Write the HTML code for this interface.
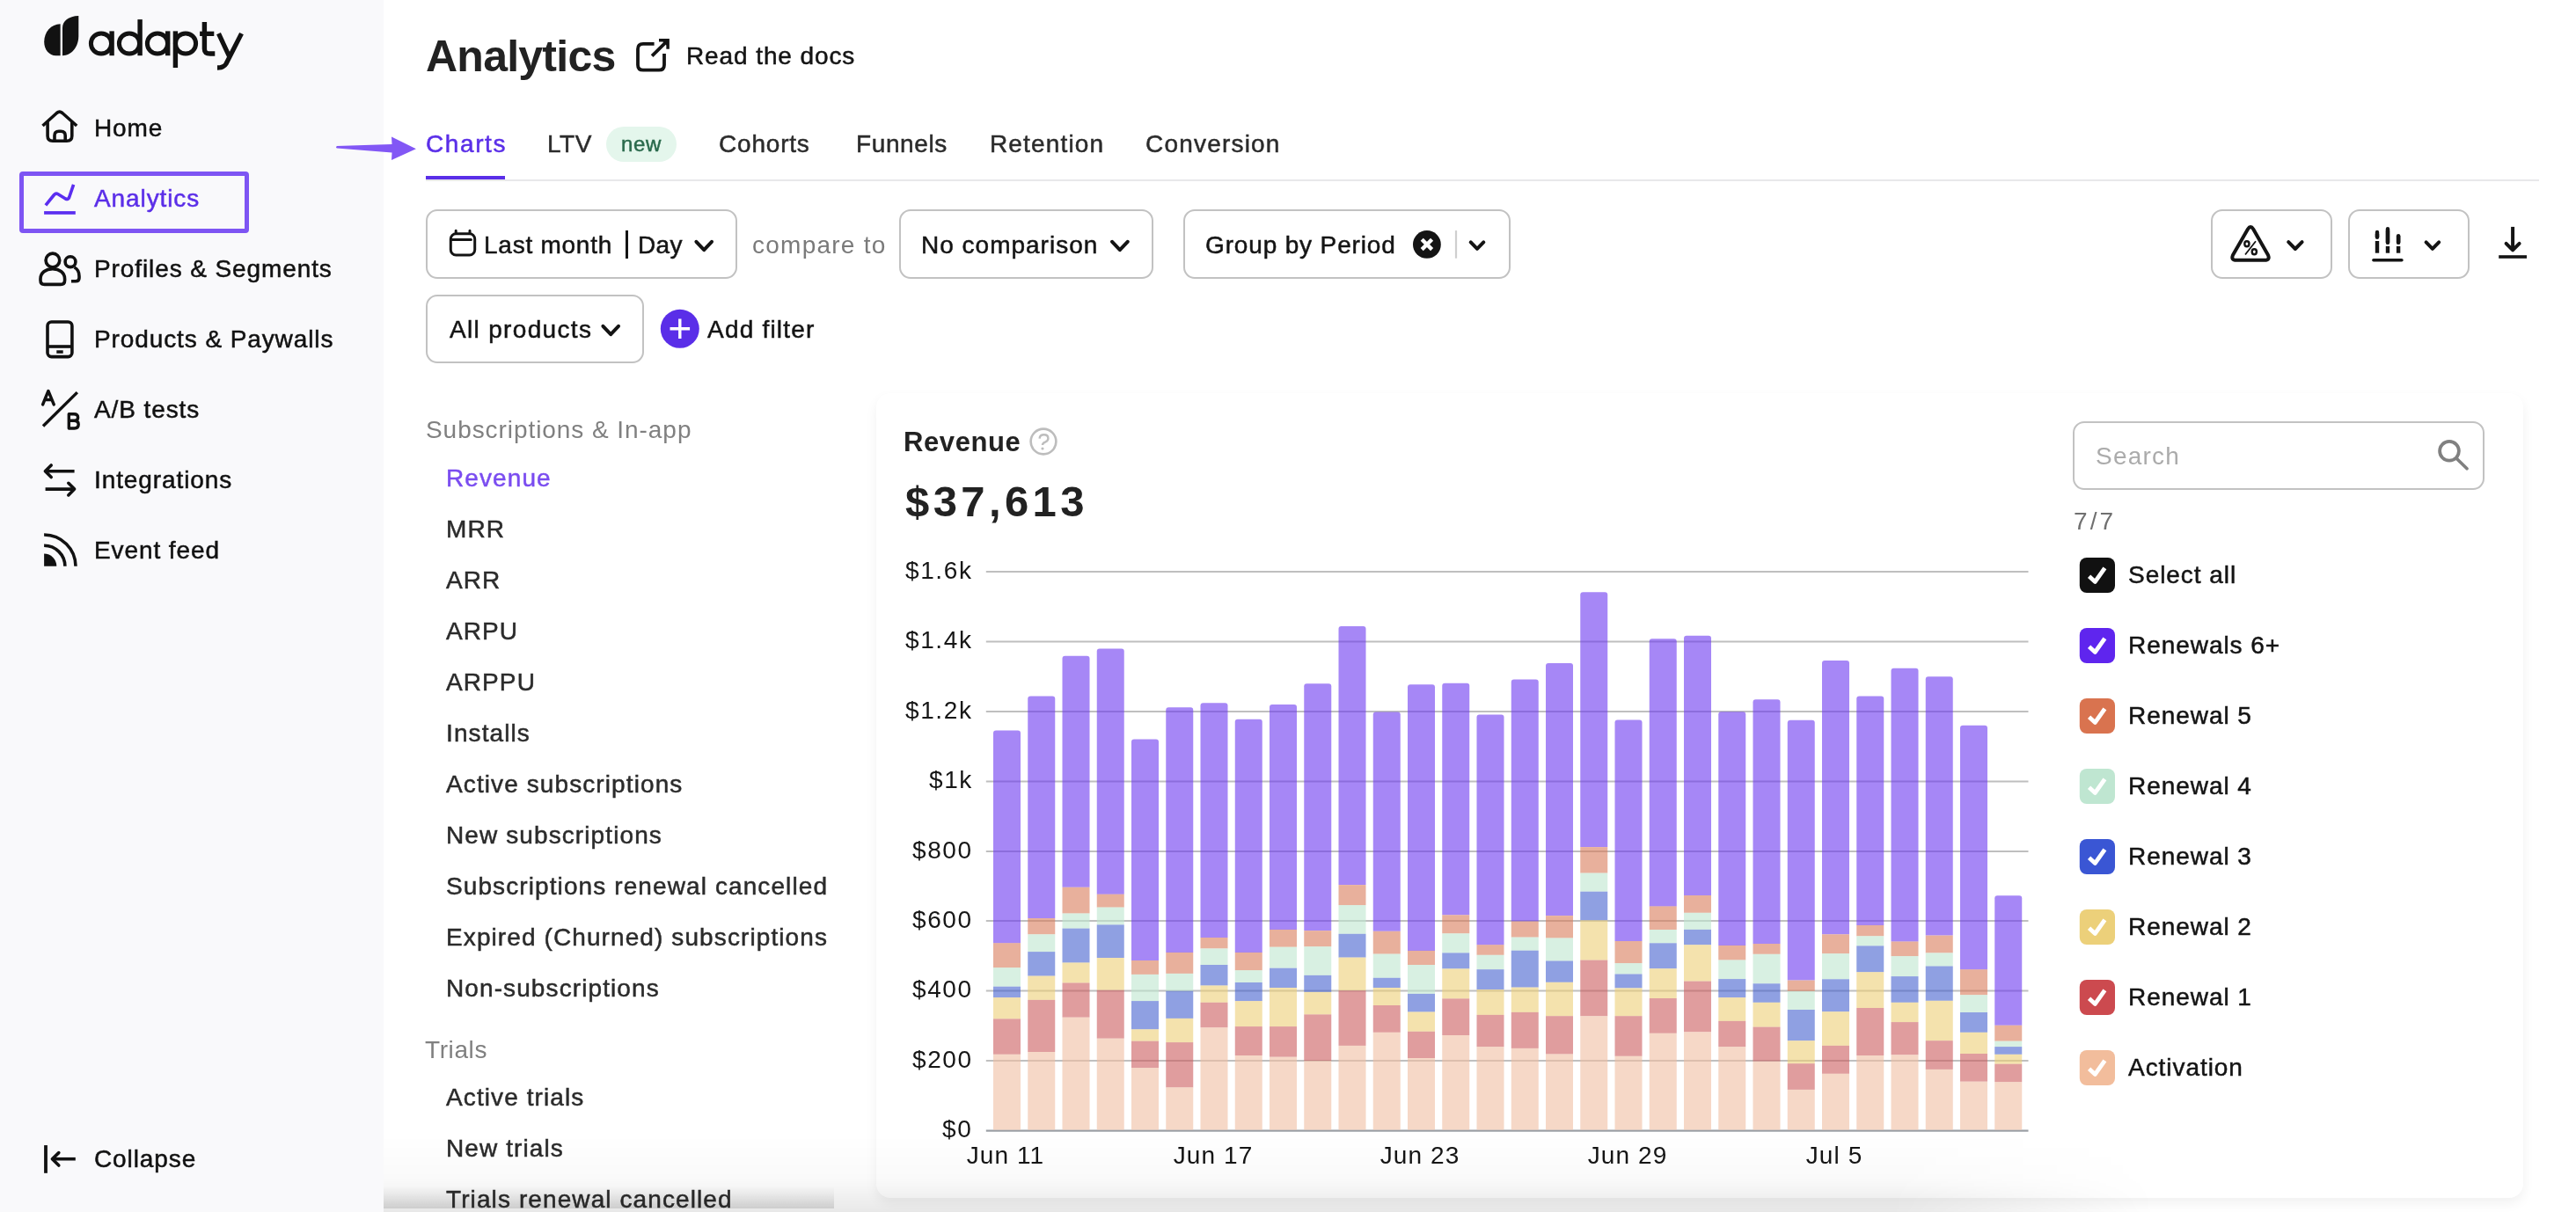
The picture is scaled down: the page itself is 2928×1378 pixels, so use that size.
<!DOCTYPE html>
<html><head><meta charset="utf-8"><style>
html,body{margin:0;padding:0;width:2928px;height:1378px;overflow:hidden;background:#fff}
body{position:relative;font-family:"Liberation Sans",sans-serif}
.t{position:absolute;line-height:1;white-space:nowrap;font-family:"Liberation Sans",sans-serif}
.m{-webkit-text-stroke:0.5px currentColor}
.t{will-change:transform}
svg{overflow:visible}
</style></head><body>
<div style="position:absolute;left:0.0px;top:0.0px;width:436.0px;height:1378.0px;background:#f9f9fb"></div>
<svg style="position:absolute;left:40px;top:10px;" width="250" height="75" viewBox="40 10 250 75"><g fill="#121212">
<path d="M68.6 27.3 L68.6 63.2 L63.5 63.2 C55.8 63.2 50.2 56.5 50.2 47.5 C50.2 36.5 58 27.6 68.6 27.3 Z"/>
<path d="M71 63.2 L71 31.5 C71 24 78 18.2 89.3 18 L89.3 41 C89.3 53.5 81 63.2 71 63.2 Z"/>
</g>
<g fill="none" stroke="#121212" stroke-width="5">
<circle cx="115" cy="49.5" r="11.6"/>
<circle cx="147" cy="49.5" r="11.6"/>
<circle cx="179" cy="49.5" r="11.6"/>
<circle cx="211" cy="49.5" r="11.6"/>
</g>
<g fill="#121212">
<rect x="124.4" y="35.4" width="5.4" height="27.8"/>
<rect x="156.4" y="22.1" width="5.4" height="41.1"/>
<rect x="188" y="35.4" width="5.4" height="27.8"/>
<rect x="196.7" y="35.4" width="5.4" height="41.6"/>
</g>
<path d="M232.4 25 V55.5 C232.4 60 235 61 239 61 H244.3" fill="none" stroke="#121212" stroke-width="5.4"/>
<rect x="227.1" y="35.7" width="16.2" height="5.3" fill="#121212"/>
<path d="M248.5 38.1 L261 65 M274.5 38.1 L257 72.5 C255 76 252 77 247 77" fill="none" stroke="#121212" stroke-width="5.3"/>
</svg>
<div style="position:absolute;left:22.0px;top:195.3px;width:261.3px;height:70.1px;box-sizing:border-box;border:5.8px solid #7e55f3;border-radius:4px"></div>
<svg style="position:absolute;left:40px;top:115px;" width="60" height="60" viewBox="40 115 60 60"><g fill="none" stroke="#111" stroke-width="3.6" stroke-linecap="round" stroke-linejoin="round">
<path d="M48.5 143 L64.5 128.5 Q67.7 125.8 70.9 128.5 L87.2 143" stroke-linecap="butt"/>
<path d="M54.1 139.5 V154.5 Q54.1 160.2 59.8 160.2 H76 Q81.8 160.2 81.8 154.5 V139.5" />
<path d="M62 160.2 V154 Q62 149.2 66.8 149.2 H69.2 Q74.2 149.2 74.2 154 V160.2"/>
</g></svg>
<svg style="position:absolute;left:40px;top:200px;" width="60" height="60" viewBox="40 200 60 60"><g fill="none" stroke="#5b2ef0" stroke-width="3.6" stroke-linejoin="round">
<path d="M51.9 233.4 L61.5 221.5 Q63.5 219.3 66 220.8 L74.5 226 Q77.5 227.3 78.6 224.5 L83.6 209.9"/>
</g><rect x="50.1" y="240.1" width="35.7" height="3.7" fill="#5b2ef0"/></svg>
<svg style="position:absolute;left:40px;top:280px;" width="60" height="50" viewBox="40 280 60 50"><g fill="none" stroke="#111" stroke-width="3.6" stroke-linecap="round" stroke-linejoin="round">
<circle cx="59.9" cy="296" r="7.85"/>
<path d="M46 317 C46 310 52 305.8 59.8 305.8 C67.6 305.8 73.6 310 73.6 317 V318.8 Q73.6 323.4 69 323.4 H50.6 Q46 323.4 46 318.8 Z"/>
<circle cx="80" cy="297.7" r="5.9"/>
<path d="M84.5 304 C88.5 306 90 310 90 314 V316 Q90 319.8 86 319.8 H81" stroke-linecap="butt"/>
</g></svg>
<svg style="position:absolute;left:40px;top:355px;" width="60" height="60" viewBox="40 355 60 60"><g fill="none" stroke="#111" stroke-width="3.6" stroke-linecap="round" stroke-linejoin="round">
<rect x="54" y="366" width="27.9" height="39.6" rx="4.5"/>
<path d="M54 394 H81.9" stroke-linecap="butt"/>
</g><rect x="64.3" y="398.3" width="7.4" height="3.5" fill="#111"/></svg>
<svg style="position:absolute;left:40px;top:435px;" width="60" height="60" viewBox="40 435 60 60"><g fill="none" stroke="#111" stroke-width="3.4" stroke-linecap="round" stroke-linejoin="round">
<path d="M48.6 460 L54.9 444.5 L61.3 460 M51 454.5 H58.8"/>
<path d="M49 484.5 L87.8 446.1" stroke-linecap="butt"/>
<path d="M78.3 487 V470.8 H84 Q88.6 470.8 88.6 474.7 Q88.6 478.3 84.3 478.3 H78.3 M84.3 478.3 Q89.2 478.3 89.2 482.5 Q89.2 487 84.5 487 H78.3"/>
</g></svg>
<svg style="position:absolute;left:40px;top:515px;" width="60" height="60" viewBox="40 515 60 60"><g fill="none" stroke="#111" stroke-width="3.6" stroke-linecap="round" stroke-linejoin="round">
<path d="M51.5 535.8 H84.6" stroke-linecap="butt"/>
<path d="M58.2 529 L51.4 535.8 L58.2 542.6"/>
<path d="M51.6 556.1 H85" stroke-linecap="butt"/>
<path d="M77.8 549.3 L84.6 556.1 L77.8 562.9"/>
</g></svg>
<svg style="position:absolute;left:40px;top:595px;" width="60" height="60" viewBox="40 595 60 60"><path d="M50.1 629.6 A14.2 14.2 0 0 1 64.3 643.8 H50.1 Z" fill="#111"/>
<g fill="none" stroke="#111" stroke-width="3.6">
<path d="M50.1 620.2 A23.8 23.8 0 0 1 73.9 643.8"/>
<path d="M50.1 608 A36 36 0 0 1 86 643.8"/>
</g></svg>
<svg style="position:absolute;left:40px;top:1288px;" width="60" height="60" viewBox="40 1288 60 60"><rect x="50.1" y="1302.1" width="3.8" height="31.7" fill="#111"/>
<g fill="none" stroke="#111" stroke-width="3.6" stroke-linecap="round" stroke-linejoin="round"><path d="M59.5 1317.7 H85.8" stroke-linecap="butt"/><path d="M66.8 1310.6 L59.4 1317.8 L66.8 1325"/></g></svg>
<div class="t m" style="left:106.5px;top:132.3px;font-size:28px;color:#111;font-weight:400;letter-spacing:0.9px;">Home</div>
<div class="t m" style="left:106.5px;top:212.3px;font-size:28px;color:#5b2ee8;font-weight:400;letter-spacing:0.9px;">Analytics</div>
<div class="t m" style="left:106.5px;top:292.3px;font-size:28px;color:#111;font-weight:400;letter-spacing:0.9px;">Profiles &amp; Segments</div>
<div class="t m" style="left:106.5px;top:372.3px;font-size:28px;color:#111;font-weight:400;letter-spacing:0.9px;">Products &amp; Paywalls</div>
<div class="t m" style="left:106.5px;top:452.3px;font-size:28px;color:#111;font-weight:400;letter-spacing:0.9px;">A/B tests</div>
<div class="t m" style="left:106.5px;top:532.3px;font-size:28px;color:#111;font-weight:400;letter-spacing:0.9px;">Integrations</div>
<div class="t m" style="left:106.5px;top:612.3px;font-size:28px;color:#111;font-weight:400;letter-spacing:0.9px;">Event feed</div>
<div class="t m" style="left:106.5px;top:1304.3px;font-size:28px;color:#111;font-weight:400;letter-spacing:0.9px;">Collapse</div>
<div class="t" style="left:484.3px;top:38.7px;font-size:50px;color:#222;font-weight:700;letter-spacing:-0.76px;">Analytics</div>
<svg style="position:absolute;left:715px;top:35px;" width="60" height="55" viewBox="715 35 60 55"><g fill="none" stroke="#141414" stroke-width="3.8">
<path d="M743.6 49.8 H731 Q725 49.8 725 55.8 V73.7 Q725 79.7 731 79.7 H749 Q755 79.7 755 73.7 V61.1"/>
<path d="M741.1 63.6 L758 46.9"/>
</g><path d="M749 45.8 H759.1 V55.7" fill="none" stroke="#141414" stroke-width="3.5"/><path d="M752 45.8 H759.1 V52.9 Z" fill="#141414"/></svg>
<div class="t m" style="left:780.2px;top:50.3px;font-size:28px;color:#141414;font-weight:400;letter-spacing:0.9px;">Read the docs</div>
<div style="position:absolute;left:484.0px;top:204.0px;width:2402.0px;height:2.0px;background:#e8e8ea"></div>
<div style="position:absolute;left:484.0px;top:200.0px;width:90.0px;height:4.2px;background:#5a2ee8"></div>
<div class="t m" style="left:483.7px;top:149.8px;font-size:28px;color:#5a2ee8;font-weight:400;letter-spacing:1.6px;">Charts</div>
<div class="t m" style="left:621.8px;top:149.8px;font-size:28px;color:#2b2b2b;font-weight:400;letter-spacing:0.6px;">LTV</div>
<div style="position:absolute;left:689.0px;top:144.4px;width:80.0px;height:39.6px;background:#e4f6ec;border-radius:20px"></div>
<div class="t m" style="left:706.0px;top:152.1px;font-size:24px;color:#2a6a4c;font-weight:400;letter-spacing:0.7px;">new</div>
<div class="t m" style="left:817.0px;top:149.8px;font-size:28px;color:#2b2b2b;font-weight:400;letter-spacing:0.8px;">Cohorts</div>
<div class="t m" style="left:973.0px;top:149.8px;font-size:28px;color:#2b2b2b;font-weight:400;letter-spacing:0.6px;">Funnels</div>
<div class="t m" style="left:1125.1px;top:149.8px;font-size:28px;color:#2b2b2b;font-weight:400;letter-spacing:1.15px;">Retention</div>
<div class="t m" style="left:1302.0px;top:149.8px;font-size:28px;color:#2b2b2b;font-weight:400;letter-spacing:1.2px;">Conversion</div>
<svg style="position:absolute;left:370px;top:145px;" width="120" height="45" viewBox="370 145 120 45"><path d="M383 166 L445.5 164 L445 155.4 L472.9 169.3 L445 182.1 L445.5 173.6 L383 168.6 Q381 167.3 383 166 Z" fill="#8257f5"/></svg>
<div style="position:absolute;left:484.4px;top:238.2px;width:354.1px;height:79.2px;box-sizing:border-box;border:2px solid #c2c2c2;border-radius:13px;background:#fff"></div>
<div style="position:absolute;left:1021.7px;top:238.2px;width:289.6px;height:79.2px;box-sizing:border-box;border:2px solid #c2c2c2;border-radius:13px;background:#fff"></div>
<div style="position:absolute;left:1344.8px;top:238.2px;width:372.2px;height:79.2px;box-sizing:border-box;border:2px solid #c2c2c2;border-radius:13px;background:#fff"></div>
<div style="position:absolute;left:2513.0px;top:238.2px;width:137.7px;height:79.2px;box-sizing:border-box;border:2px solid #c2c2c2;border-radius:13px;background:#fff"></div>
<div style="position:absolute;left:2668.5px;top:238.2px;width:138.5px;height:79.2px;box-sizing:border-box;border:2px solid #c2c2c2;border-radius:13px;background:#fff"></div>
<div style="position:absolute;left:484.4px;top:334.6px;width:248.1px;height:78.7px;box-sizing:border-box;border:2px solid #c2c2c2;border-radius:13px;background:#fff"></div>
<svg style="position:absolute;left:500px;top:250px;" width="60" height="55" viewBox="500 250 60 55"><g fill="none" stroke="#141414" stroke-width="3">
<rect x="512.3" y="265.7" width="27.4" height="24.3" rx="6"/>
<path d="M513 272.5 H535.4" stroke-linecap="round"/>
<path d="M518.2 262.3 V265.5 M534 262.3 V265.5" stroke-linecap="round"/>
</g></svg>
<div class="t m" style="left:550.0px;top:264.5px;font-size:28px;color:#141414;font-weight:400;letter-spacing:0.75px;">Last month</div>
<div style="position:absolute;left:711.0px;top:261.5px;width:2.6px;height:32.5px;background:#141414"></div>
<div class="t m" style="left:724.5px;top:264.5px;font-size:28px;color:#141414;font-weight:400;letter-spacing:0.3px;">Day</div>
<svg style="position:absolute;left:780px;top:260px;" width="40" height="40" viewBox="780 260 40 40"><path d="M791.4 274.8 L800.2 284.2 L809.0 274.8" fill="none" stroke="#141414" stroke-width="4.0" stroke-linecap="round" stroke-linejoin="round"/></svg>
<div class="t" style="left:854.5px;top:264.5px;font-size:28px;color:#7a7a7a;font-weight:400;letter-spacing:1.25px;">compare to</div>
<div class="t m" style="left:1047.1px;top:264.5px;font-size:28px;color:#141414;font-weight:400;letter-spacing:1.0px;">No comparison</div>
<svg style="position:absolute;left:1255px;top:260px;" width="40" height="40" viewBox="1255 260 40 40"><path d="M1264.1 274.8 L1272.9 284.2 L1281.7 274.8" fill="none" stroke="#141414" stroke-width="4.0" stroke-linecap="round" stroke-linejoin="round"/></svg>
<div class="t m" style="left:1369.5px;top:264.5px;font-size:28px;color:#141414;font-weight:400;letter-spacing:0.85px;">Group by Period</div>
<svg style="position:absolute;left:1595px;top:255px;" width="105" height="45" viewBox="1595 255 105 45"><circle cx="1621.9" cy="277.9" r="15.9" fill="#141414"/>
<path d="M1616.2 272.2 L1627.6 283.6 M1627.6 272.2 L1616.2 283.6" stroke="#fff" stroke-width="4.4"/>
<rect x="1653.9" y="262.1" width="2.2" height="31.6" fill="#cfcfcf"/><path d="M1671.7 275.4 L1679.0 282.9 L1686.3 275.4" fill="none" stroke="#141414" stroke-width="4.0" stroke-linecap="round" stroke-linejoin="round"/></svg>
<svg style="position:absolute;left:2525px;top:250px;" width="100" height="55" viewBox="2525 250 100 55"><path d="M2555 260.5 Q2558.1 255.5 2561.2 260.5 L2578 290 Q2580.5 295.8 2574 295.8 H2542 Q2535.5 295.8 2538 290 Z" fill="none" stroke="#141414" stroke-width="4" stroke-linejoin="round"/>
<ellipse cx="2553.9" cy="277.3" rx="2.6" ry="3" fill="none" stroke="#141414" stroke-width="2.4"/>
<ellipse cx="2562.3" cy="286.3" rx="2.6" ry="3" fill="none" stroke="#141414" stroke-width="2.4"/>
<path d="M2552 289.5 L2564 274.3" stroke="#141414" stroke-width="1.8"/><path d="M2601.2 275.2 L2608.9 283.0 L2616.6 275.2" fill="none" stroke="#141414" stroke-width="4.0" stroke-linecap="round" stroke-linejoin="round"/></svg>
<svg style="position:absolute;left:2685px;top:250px;" width="100" height="55" viewBox="2685 250 100 55"><g stroke="#141414" stroke-width="4.4" stroke-linecap="round" fill="none">
<path d="M2702 264 V269.7" /><path d="M2714 260.2 V275.9"/><path d="M2726.1 268.1 V275.9"/>
<path d="M2697.9 295.8 H2729.9" stroke-width="3.6"/>
</g><g fill="#141414"><rect x="2699.8" y="274" width="4.4" height="13.7"/><rect x="2711.8" y="280" width="4.4" height="7.7"/><rect x="2723.9" y="280" width="4.4" height="7.7"/>
<rect x="2699.8" y="266" width="4.4" height="3.7"/><rect x="2711.8" y="262" width="4.4" height="13.9"/><rect x="2723.9" y="268" width="4.4" height="7.9"/></g><path d="M2757.6 275.4 L2764.9 282.9 L2772.2 275.4" fill="none" stroke="#141414" stroke-width="4.0" stroke-linecap="round" stroke-linejoin="round"/></svg>
<svg style="position:absolute;left:2825px;top:250px;" width="60" height="55" viewBox="2825 250 60 55"><path d="M2856.1 257.9 V283" stroke="#141414" stroke-width="4"/>
<path d="M2848.6 276.8 L2856.1 284.3 L2863.6 276.8" fill="none" stroke="#141414" stroke-width="4" stroke-linecap="round" stroke-linejoin="round"/>
<rect x="2840.2" y="290.2" width="31.8" height="3.6" fill="#141414"/></svg>
<div class="t m" style="left:511.0px;top:360.5px;font-size:28px;color:#141414;font-weight:400;letter-spacing:1.33px;">All products</div>
<svg style="position:absolute;left:675px;top:360px;" width="40" height="40" viewBox="675 360 40 40"><path d="M685.4 370.8 L694.2 380.2 L703.0 370.8" fill="none" stroke="#141414" stroke-width="4.0" stroke-linecap="round" stroke-linejoin="round"/></svg>
<svg style="position:absolute;left:745px;top:345px;" width="60" height="60" viewBox="745 345 60 60"><circle cx="772.8" cy="373.8" r="22" fill="#5a2ee8"/>
<path d="M772.8 362.5 V385.1 M761.5 373.8 H784.1" stroke="#fff" stroke-width="3.4"/></svg>
<div class="t m" style="left:803.9px;top:360.5px;font-size:28px;color:#141414;font-weight:400;letter-spacing:1.2px;">Add filter</div>
<div style="position:absolute;left:436.0px;top:1348.0px;width:512.0px;height:26.0px;background:linear-gradient(rgba(0,0,0,0) 0%, rgba(0,0,0,0.03) 35%, rgba(0,0,0,0.12) 100%)"></div>
<div class="t" style="left:483.7px;top:475.0px;font-size:28px;color:#808080;font-weight:400;letter-spacing:0.94px;">Subscriptions &amp; In-app</div>
<div class="t m" style="left:507.1px;top:529.5px;font-size:28px;color:#7a4cf0;font-weight:400;letter-spacing:1.1px;">Revenue</div>
<div class="t m" style="left:507.1px;top:587.5px;font-size:28px;color:#2b2b2b;font-weight:400;letter-spacing:1.1px;">MRR</div>
<div class="t m" style="left:507.1px;top:645.5px;font-size:28px;color:#2b2b2b;font-weight:400;letter-spacing:1.1px;">ARR</div>
<div class="t m" style="left:507.1px;top:703.5px;font-size:28px;color:#2b2b2b;font-weight:400;letter-spacing:1.1px;">ARPU</div>
<div class="t m" style="left:507.1px;top:761.5px;font-size:28px;color:#2b2b2b;font-weight:400;letter-spacing:1.1px;">ARPPU</div>
<div class="t m" style="left:507.1px;top:819.5px;font-size:28px;color:#2b2b2b;font-weight:400;letter-spacing:1.1px;">Installs</div>
<div class="t m" style="left:507.1px;top:877.5px;font-size:28px;color:#2b2b2b;font-weight:400;letter-spacing:1.1px;">Active subscriptions</div>
<div class="t m" style="left:507.1px;top:935.5px;font-size:28px;color:#2b2b2b;font-weight:400;letter-spacing:1.1px;">New subscriptions</div>
<div class="t m" style="left:507.1px;top:993.5px;font-size:28px;color:#2b2b2b;font-weight:400;letter-spacing:1.1px;">Subscriptions renewal cancelled</div>
<div class="t m" style="left:507.1px;top:1051.5px;font-size:28px;color:#2b2b2b;font-weight:400;letter-spacing:1.1px;">Expired (Churned) subscriptions</div>
<div class="t m" style="left:507.1px;top:1109.5px;font-size:28px;color:#2b2b2b;font-weight:400;letter-spacing:1.1px;">Non-subscriptions</div>
<div class="t" style="left:483.1px;top:1179.8px;font-size:28px;color:#808080;font-weight:400;letter-spacing:0.6px;">Trials</div>
<div class="t m" style="left:507.1px;top:1234.3px;font-size:28px;color:#2b2b2b;font-weight:400;letter-spacing:1.1px;">Active trials</div>
<div class="t m" style="left:507.1px;top:1292.3px;font-size:28px;color:#2b2b2b;font-weight:400;letter-spacing:1.1px;">New trials</div>
<div class="t m" style="left:507.1px;top:1350.3px;font-size:28px;color:#2b2b2b;font-weight:400;letter-spacing:1.1px;">Trials renewal cancelled</div>
<div style="position:absolute;left:995.6px;top:446.7px;width:1872.4px;height:915.6px;background:#fff;border-radius:16px;box-shadow:0 6px 14px rgba(0,0,0,0.06)"></div>
<div class="t" style="left:1027.3px;top:486.7px;font-size:31px;color:#222;font-weight:700;letter-spacing:0.6px;">Revenue</div>
<svg style="position:absolute;left:1165px;top:480px;" width="45" height="45" viewBox="1165 480 45 45"><circle cx="1186" cy="502" r="14.4" fill="none" stroke="#bdbdbd" stroke-width="2.6"/>
<path d="M1181.6 498.6 Q1182 494.3 1186.6 494.3 Q1191.4 494.3 1191.4 498.4 Q1191.4 501 1188 502.6 Q1185 503.8 1185 506" fill="none" stroke="#bdbdbd" stroke-width="2.4"/>
<circle cx="1185" cy="510" r="1.6" fill="#bdbdbd"/></svg>
<div class="t" style="left:1029.3px;top:545.5px;font-size:49px;color:#222;font-weight:700;letter-spacing:4.4px;">$37,613</div>
<svg style="position:absolute;left:1100px;top:640px;" width="1220" height="660" viewBox="1100 640 1220 660"><rect x="1120.8" y="649.0" width="1184.7" height="2" fill="#bfbfbf"/><rect x="1120.8" y="728.5" width="1184.7" height="2" fill="#bfbfbf"/><rect x="1120.8" y="808.0" width="1184.7" height="2" fill="#bfbfbf"/><rect x="1120.8" y="887.5" width="1184.7" height="2" fill="#bfbfbf"/><rect x="1120.8" y="967.0" width="1184.7" height="2" fill="#bfbfbf"/><rect x="1120.8" y="1046.0" width="1184.7" height="2" fill="#bfbfbf"/><rect x="1120.8" y="1125.5" width="1184.7" height="2" fill="#bfbfbf"/><rect x="1120.8" y="1205.0" width="1184.7" height="2" fill="#bfbfbf"/><rect x="1120.8" y="1284.5" width="1184.7" height="2.2" fill="#9a9ea4"/><path d="M1129.00 1072.20 V833.60 Q1129.00 830.60 1132.00 830.60 H1157.00 Q1160.00 830.60 1160.00 833.60 V1072.20 Z" fill="#6b37f0" fill-opacity="0.6"/><rect x="1129.00" y="1072.20" width="31" height="28.00" fill="#d97b5a" fill-opacity="0.6"/><rect x="1129.00" y="1100.20" width="31" height="21.50" fill="#bee6cf" fill-opacity="0.6"/><rect x="1129.00" y="1121.70" width="31" height="12.40" fill="#4461cf" fill-opacity="0.6"/><rect x="1129.00" y="1134.10" width="31" height="24.30" fill="#edcf76" fill-opacity="0.6"/><rect x="1129.00" y="1158.40" width="31" height="40.40" fill="#cb5c5d" fill-opacity="0.6"/><rect x="1129.00" y="1198.80" width="31" height="85.80" fill="#f0bea2" fill-opacity="0.6"/><path d="M1168.25 1044.00 V794.40 Q1168.25 791.40 1171.25 791.40 H1196.25 Q1199.25 791.40 1199.25 794.40 V1044.00 Z" fill="#6b37f0" fill-opacity="0.6"/><rect x="1168.25" y="1044.00" width="31" height="18.30" fill="#d97b5a" fill-opacity="0.6"/><rect x="1168.25" y="1062.30" width="31" height="19.80" fill="#bee6cf" fill-opacity="0.6"/><rect x="1168.25" y="1082.10" width="31" height="27.50" fill="#4461cf" fill-opacity="0.6"/><rect x="1168.25" y="1109.60" width="31" height="27.30" fill="#edcf76" fill-opacity="0.6"/><rect x="1168.25" y="1136.90" width="31" height="59.10" fill="#cb5c5d" fill-opacity="0.6"/><rect x="1168.25" y="1196.00" width="31" height="88.60" fill="#f0bea2" fill-opacity="0.6"/><path d="M1207.50 1008.80 V748.80 Q1207.50 745.80 1210.50 745.80 H1235.50 Q1238.50 745.80 1238.50 748.80 V1008.80 Z" fill="#6b37f0" fill-opacity="0.6"/><rect x="1207.50" y="1008.80" width="31" height="29.70" fill="#d97b5a" fill-opacity="0.6"/><rect x="1207.50" y="1038.50" width="31" height="17.10" fill="#bee6cf" fill-opacity="0.6"/><rect x="1207.50" y="1055.60" width="31" height="38.90" fill="#4461cf" fill-opacity="0.6"/><rect x="1207.50" y="1094.50" width="31" height="23.00" fill="#edcf76" fill-opacity="0.6"/><rect x="1207.50" y="1117.50" width="31" height="39.20" fill="#cb5c5d" fill-opacity="0.6"/><rect x="1207.50" y="1156.70" width="31" height="127.90" fill="#f0bea2" fill-opacity="0.6"/><path d="M1246.75 1016.70 V740.60 Q1246.75 737.60 1249.75 737.60 H1274.75 Q1277.75 737.60 1277.75 740.60 V1016.70 Z" fill="#6b37f0" fill-opacity="0.6"/><rect x="1246.75" y="1016.70" width="31" height="14.90" fill="#d97b5a" fill-opacity="0.6"/><rect x="1246.75" y="1031.60" width="31" height="19.80" fill="#bee6cf" fill-opacity="0.6"/><rect x="1246.75" y="1051.40" width="31" height="37.60" fill="#4461cf" fill-opacity="0.6"/><rect x="1246.75" y="1089.00" width="31" height="36.70" fill="#edcf76" fill-opacity="0.6"/><rect x="1246.75" y="1125.70" width="31" height="55.00" fill="#cb5c5d" fill-opacity="0.6"/><rect x="1246.75" y="1180.70" width="31" height="103.90" fill="#f0bea2" fill-opacity="0.6"/><path d="M1286.00 1092.00 V843.50 Q1286.00 840.50 1289.00 840.50 H1314.00 Q1317.00 840.50 1317.00 843.50 V1092.00 Z" fill="#6b37f0" fill-opacity="0.6"/><rect x="1286.00" y="1092.00" width="31" height="15.90" fill="#d97b5a" fill-opacity="0.6"/><rect x="1286.00" y="1107.90" width="31" height="30.20" fill="#bee6cf" fill-opacity="0.6"/><rect x="1286.00" y="1138.10" width="31" height="32.20" fill="#4461cf" fill-opacity="0.6"/><rect x="1286.00" y="1170.30" width="31" height="13.40" fill="#edcf76" fill-opacity="0.6"/><rect x="1286.00" y="1183.70" width="31" height="30.40" fill="#cb5c5d" fill-opacity="0.6"/><rect x="1286.00" y="1214.10" width="31" height="70.50" fill="#f0bea2" fill-opacity="0.6"/><path d="M1325.25 1082.90 V807.20 Q1325.25 804.20 1328.25 804.20 H1353.25 Q1356.25 804.20 1356.25 807.20 V1082.90 Z" fill="#6b37f0" fill-opacity="0.6"/><rect x="1325.25" y="1082.90" width="31" height="24.00" fill="#d97b5a" fill-opacity="0.6"/><rect x="1325.25" y="1106.90" width="31" height="19.80" fill="#bee6cf" fill-opacity="0.6"/><rect x="1325.25" y="1126.70" width="31" height="31.20" fill="#4461cf" fill-opacity="0.6"/><rect x="1325.25" y="1157.90" width="31" height="27.20" fill="#edcf76" fill-opacity="0.6"/><rect x="1325.25" y="1185.10" width="31" height="51.30" fill="#cb5c5d" fill-opacity="0.6"/><rect x="1325.25" y="1236.40" width="31" height="48.20" fill="#f0bea2" fill-opacity="0.6"/><path d="M1364.50 1066.00 V802.30 Q1364.50 799.30 1367.50 799.30 H1392.50 Q1395.50 799.30 1395.50 802.30 V1066.00 Z" fill="#6b37f0" fill-opacity="0.6"/><rect x="1364.50" y="1066.00" width="31" height="12.40" fill="#d97b5a" fill-opacity="0.6"/><rect x="1364.50" y="1078.40" width="31" height="18.60" fill="#bee6cf" fill-opacity="0.6"/><rect x="1364.50" y="1097.00" width="31" height="23.50" fill="#4461cf" fill-opacity="0.6"/><rect x="1364.50" y="1120.50" width="31" height="19.30" fill="#edcf76" fill-opacity="0.6"/><rect x="1364.50" y="1139.80" width="31" height="28.50" fill="#cb5c5d" fill-opacity="0.6"/><rect x="1364.50" y="1168.30" width="31" height="116.30" fill="#f0bea2" fill-opacity="0.6"/><path d="M1403.75 1082.90 V820.80 Q1403.75 817.80 1406.75 817.80 H1431.75 Q1434.75 817.80 1434.75 820.80 V1082.90 Z" fill="#6b37f0" fill-opacity="0.6"/><rect x="1403.75" y="1082.90" width="31" height="20.30" fill="#d97b5a" fill-opacity="0.6"/><rect x="1403.75" y="1103.20" width="31" height="13.80" fill="#bee6cf" fill-opacity="0.6"/><rect x="1403.75" y="1117.00" width="31" height="21.10" fill="#4461cf" fill-opacity="0.6"/><rect x="1403.75" y="1138.10" width="31" height="29.00" fill="#edcf76" fill-opacity="0.6"/><rect x="1403.75" y="1167.10" width="31" height="32.90" fill="#cb5c5d" fill-opacity="0.6"/><rect x="1403.75" y="1200.00" width="31" height="84.60" fill="#f0bea2" fill-opacity="0.6"/><path d="M1443.00 1056.90 V803.90 Q1443.00 800.90 1446.00 800.90 H1471.00 Q1474.00 800.90 1474.00 803.90 V1056.90 Z" fill="#6b37f0" fill-opacity="0.6"/><rect x="1443.00" y="1056.90" width="31" height="19.80" fill="#d97b5a" fill-opacity="0.6"/><rect x="1443.00" y="1076.70" width="31" height="24.00" fill="#bee6cf" fill-opacity="0.6"/><rect x="1443.00" y="1100.70" width="31" height="22.30" fill="#4461cf" fill-opacity="0.6"/><rect x="1443.00" y="1123.00" width="31" height="44.10" fill="#edcf76" fill-opacity="0.6"/><rect x="1443.00" y="1167.10" width="31" height="34.60" fill="#cb5c5d" fill-opacity="0.6"/><rect x="1443.00" y="1201.70" width="31" height="82.90" fill="#f0bea2" fill-opacity="0.6"/><path d="M1482.25 1058.10 V780.20 Q1482.25 777.20 1485.25 777.20 H1510.25 Q1513.25 777.20 1513.25 780.20 V1058.10 Z" fill="#6b37f0" fill-opacity="0.6"/><rect x="1482.25" y="1058.10" width="31" height="18.10" fill="#d97b5a" fill-opacity="0.6"/><rect x="1482.25" y="1076.20" width="31" height="32.70" fill="#bee6cf" fill-opacity="0.6"/><rect x="1482.25" y="1108.90" width="31" height="19.00" fill="#4461cf" fill-opacity="0.6"/><rect x="1482.25" y="1127.90" width="31" height="25.50" fill="#edcf76" fill-opacity="0.6"/><rect x="1482.25" y="1153.40" width="31" height="52.60" fill="#cb5c5d" fill-opacity="0.6"/><rect x="1482.25" y="1206.00" width="31" height="78.60" fill="#f0bea2" fill-opacity="0.6"/><path d="M1521.50 1006.10 V715.10 Q1521.50 712.10 1524.50 712.10 H1549.50 Q1552.50 712.10 1552.50 715.10 V1006.10 Z" fill="#6b37f0" fill-opacity="0.6"/><rect x="1521.50" y="1006.10" width="31" height="23.00" fill="#d97b5a" fill-opacity="0.6"/><rect x="1521.50" y="1029.10" width="31" height="32.70" fill="#bee6cf" fill-opacity="0.6"/><rect x="1521.50" y="1061.80" width="31" height="26.80" fill="#4461cf" fill-opacity="0.6"/><rect x="1521.50" y="1088.60" width="31" height="37.60" fill="#edcf76" fill-opacity="0.6"/><rect x="1521.50" y="1126.20" width="31" height="62.70" fill="#cb5c5d" fill-opacity="0.6"/><rect x="1521.50" y="1188.90" width="31" height="95.70" fill="#f0bea2" fill-opacity="0.6"/><path d="M1560.75 1058.80 V812.50 Q1560.75 809.50 1563.75 809.50 H1588.75 Q1591.75 809.50 1591.75 812.50 V1058.80 Z" fill="#6b37f0" fill-opacity="0.6"/><rect x="1560.75" y="1058.80" width="31" height="25.80" fill="#d97b5a" fill-opacity="0.6"/><rect x="1560.75" y="1084.60" width="31" height="27.20" fill="#bee6cf" fill-opacity="0.6"/><rect x="1560.75" y="1111.80" width="31" height="11.20" fill="#4461cf" fill-opacity="0.6"/><rect x="1560.75" y="1123.00" width="31" height="20.00" fill="#edcf76" fill-opacity="0.6"/><rect x="1560.75" y="1143.00" width="31" height="30.80" fill="#cb5c5d" fill-opacity="0.6"/><rect x="1560.75" y="1173.80" width="31" height="110.80" fill="#f0bea2" fill-opacity="0.6"/><path d="M1600.00 1080.90 V781.20 Q1600.00 778.20 1603.00 778.20 H1628.00 Q1631.00 778.20 1631.00 781.20 V1080.90 Z" fill="#6b37f0" fill-opacity="0.6"/><rect x="1600.00" y="1080.90" width="31" height="16.10" fill="#d97b5a" fill-opacity="0.6"/><rect x="1600.00" y="1097.00" width="31" height="32.90" fill="#bee6cf" fill-opacity="0.6"/><rect x="1600.00" y="1129.90" width="31" height="20.60" fill="#4461cf" fill-opacity="0.6"/><rect x="1600.00" y="1150.50" width="31" height="22.30" fill="#edcf76" fill-opacity="0.6"/><rect x="1600.00" y="1172.80" width="31" height="30.20" fill="#cb5c5d" fill-opacity="0.6"/><rect x="1600.00" y="1203.00" width="31" height="81.60" fill="#f0bea2" fill-opacity="0.6"/><path d="M1639.25 1040.30 V779.80 Q1639.25 776.80 1642.25 776.80 H1667.25 Q1670.25 776.80 1670.25 779.80 V1040.30 Z" fill="#6b37f0" fill-opacity="0.6"/><rect x="1639.25" y="1040.30" width="31" height="21.00" fill="#d97b5a" fill-opacity="0.6"/><rect x="1639.25" y="1061.30" width="31" height="22.10" fill="#bee6cf" fill-opacity="0.6"/><rect x="1639.25" y="1083.40" width="31" height="18.00" fill="#4461cf" fill-opacity="0.6"/><rect x="1639.25" y="1101.40" width="31" height="34.00" fill="#edcf76" fill-opacity="0.6"/><rect x="1639.25" y="1135.40" width="31" height="41.60" fill="#cb5c5d" fill-opacity="0.6"/><rect x="1639.25" y="1177.00" width="31" height="107.60" fill="#f0bea2" fill-opacity="0.6"/><path d="M1678.50 1074.20 V815.50 Q1678.50 812.50 1681.50 812.50 H1706.50 Q1709.50 812.50 1709.50 815.50 V1074.20 Z" fill="#6b37f0" fill-opacity="0.6"/><rect x="1678.50" y="1074.20" width="31" height="11.60" fill="#d97b5a" fill-opacity="0.6"/><rect x="1678.50" y="1085.80" width="31" height="16.40" fill="#bee6cf" fill-opacity="0.6"/><rect x="1678.50" y="1102.20" width="31" height="22.80" fill="#4461cf" fill-opacity="0.6"/><rect x="1678.50" y="1125.00" width="31" height="28.90" fill="#edcf76" fill-opacity="0.6"/><rect x="1678.50" y="1153.90" width="31" height="36.20" fill="#cb5c5d" fill-opacity="0.6"/><rect x="1678.50" y="1190.10" width="31" height="94.50" fill="#f0bea2" fill-opacity="0.6"/><path d="M1717.75 1047.50 V775.50 Q1717.75 772.50 1720.75 772.50 H1745.75 Q1748.75 772.50 1748.75 775.50 V1047.50 Z" fill="#6b37f0" fill-opacity="0.6"/><rect x="1717.75" y="1047.50" width="31" height="18.10" fill="#d97b5a" fill-opacity="0.6"/><rect x="1717.75" y="1065.60" width="31" height="15.10" fill="#bee6cf" fill-opacity="0.6"/><rect x="1717.75" y="1080.70" width="31" height="41.90" fill="#4461cf" fill-opacity="0.6"/><rect x="1717.75" y="1122.60" width="31" height="28.30" fill="#edcf76" fill-opacity="0.6"/><rect x="1717.75" y="1150.90" width="31" height="41.00" fill="#cb5c5d" fill-opacity="0.6"/><rect x="1717.75" y="1191.90" width="31" height="92.70" fill="#f0bea2" fill-opacity="0.6"/><path d="M1757.00 1041.10 V757.10 Q1757.00 754.10 1760.00 754.10 H1785.00 Q1788.00 754.10 1788.00 757.10 V1041.10 Z" fill="#6b37f0" fill-opacity="0.6"/><rect x="1757.00" y="1041.10" width="31" height="25.40" fill="#d97b5a" fill-opacity="0.6"/><rect x="1757.00" y="1066.50" width="31" height="26.00" fill="#bee6cf" fill-opacity="0.6"/><rect x="1757.00" y="1092.50" width="31" height="24.30" fill="#4461cf" fill-opacity="0.6"/><rect x="1757.00" y="1116.80" width="31" height="38.40" fill="#edcf76" fill-opacity="0.6"/><rect x="1757.00" y="1155.20" width="31" height="43.30" fill="#cb5c5d" fill-opacity="0.6"/><rect x="1757.00" y="1198.50" width="31" height="86.10" fill="#f0bea2" fill-opacity="0.6"/><path d="M1796.25 963.10 V676.20 Q1796.25 673.20 1799.25 673.20 H1824.25 Q1827.25 673.20 1827.25 676.20 V963.10 Z" fill="#6b37f0" fill-opacity="0.6"/><rect x="1796.25" y="963.10" width="31" height="29.50" fill="#d97b5a" fill-opacity="0.6"/><rect x="1796.25" y="992.60" width="31" height="21.10" fill="#bee6cf" fill-opacity="0.6"/><rect x="1796.25" y="1013.70" width="31" height="32.60" fill="#4461cf" fill-opacity="0.6"/><rect x="1796.25" y="1046.30" width="31" height="45.30" fill="#edcf76" fill-opacity="0.6"/><rect x="1796.25" y="1091.60" width="31" height="63.60" fill="#cb5c5d" fill-opacity="0.6"/><rect x="1796.25" y="1155.20" width="31" height="129.40" fill="#f0bea2" fill-opacity="0.6"/><path d="M1835.50 1070.00 V821.40 Q1835.50 818.40 1838.50 818.40 H1863.50 Q1866.50 818.40 1866.50 821.40 V1070.00 Z" fill="#6b37f0" fill-opacity="0.6"/><rect x="1835.50" y="1070.00" width="31" height="25.10" fill="#d97b5a" fill-opacity="0.6"/><rect x="1835.50" y="1095.10" width="31" height="12.40" fill="#bee6cf" fill-opacity="0.6"/><rect x="1835.50" y="1107.50" width="31" height="15.90" fill="#4461cf" fill-opacity="0.6"/><rect x="1835.50" y="1123.40" width="31" height="31.80" fill="#edcf76" fill-opacity="0.6"/><rect x="1835.50" y="1155.20" width="31" height="45.60" fill="#cb5c5d" fill-opacity="0.6"/><rect x="1835.50" y="1200.80" width="31" height="83.80" fill="#f0bea2" fill-opacity="0.6"/><path d="M1874.75 1030.40 V729.30 Q1874.75 726.30 1877.75 726.30 H1902.75 Q1905.75 726.30 1905.75 729.30 V1030.40 Z" fill="#6b37f0" fill-opacity="0.6"/><rect x="1874.75" y="1030.40" width="31" height="26.60" fill="#d97b5a" fill-opacity="0.6"/><rect x="1874.75" y="1057.00" width="31" height="15.30" fill="#bee6cf" fill-opacity="0.6"/><rect x="1874.75" y="1072.30" width="31" height="28.90" fill="#4461cf" fill-opacity="0.6"/><rect x="1874.75" y="1101.20" width="31" height="33.80" fill="#edcf76" fill-opacity="0.6"/><rect x="1874.75" y="1135.00" width="31" height="39.80" fill="#cb5c5d" fill-opacity="0.6"/><rect x="1874.75" y="1174.80" width="31" height="109.80" fill="#f0bea2" fill-opacity="0.6"/><path d="M1914.00 1018.00 V725.70 Q1914.00 722.70 1917.00 722.70 H1942.00 Q1945.00 722.70 1945.00 725.70 V1018.00 Z" fill="#6b37f0" fill-opacity="0.6"/><rect x="1914.00" y="1018.00" width="31" height="19.80" fill="#d97b5a" fill-opacity="0.6"/><rect x="1914.00" y="1037.80" width="31" height="19.10" fill="#bee6cf" fill-opacity="0.6"/><rect x="1914.00" y="1056.90" width="31" height="17.30" fill="#4461cf" fill-opacity="0.6"/><rect x="1914.00" y="1074.20" width="31" height="41.40" fill="#edcf76" fill-opacity="0.6"/><rect x="1914.00" y="1115.60" width="31" height="57.70" fill="#cb5c5d" fill-opacity="0.6"/><rect x="1914.00" y="1173.30" width="31" height="111.30" fill="#f0bea2" fill-opacity="0.6"/><path d="M1953.25 1074.90 V812.20 Q1953.25 809.20 1956.25 809.20 H1981.25 Q1984.25 809.20 1984.25 812.20 V1074.90 Z" fill="#6b37f0" fill-opacity="0.6"/><rect x="1953.25" y="1074.90" width="31" height="16.60" fill="#d97b5a" fill-opacity="0.6"/><rect x="1953.25" y="1091.50" width="31" height="21.60" fill="#bee6cf" fill-opacity="0.6"/><rect x="1953.25" y="1113.10" width="31" height="21.00" fill="#4461cf" fill-opacity="0.6"/><rect x="1953.25" y="1134.10" width="31" height="26.80" fill="#edcf76" fill-opacity="0.6"/><rect x="1953.25" y="1160.90" width="31" height="29.20" fill="#cb5c5d" fill-opacity="0.6"/><rect x="1953.25" y="1190.10" width="31" height="94.50" fill="#f0bea2" fill-opacity="0.6"/><path d="M1992.50 1073.00 V798.30 Q1992.50 795.30 1995.50 795.30 H2020.50 Q2023.50 795.30 2023.50 798.30 V1073.00 Z" fill="#6b37f0" fill-opacity="0.6"/><rect x="1992.50" y="1073.00" width="31" height="11.80" fill="#d97b5a" fill-opacity="0.6"/><rect x="1992.50" y="1084.80" width="31" height="33.50" fill="#bee6cf" fill-opacity="0.6"/><rect x="1992.50" y="1118.30" width="31" height="21.50" fill="#4461cf" fill-opacity="0.6"/><rect x="1992.50" y="1139.80" width="31" height="27.80" fill="#edcf76" fill-opacity="0.6"/><rect x="1992.50" y="1167.60" width="31" height="39.10" fill="#cb5c5d" fill-opacity="0.6"/><rect x="1992.50" y="1206.70" width="31" height="77.90" fill="#f0bea2" fill-opacity="0.6"/><path d="M2031.75 1114.60 V821.70 Q2031.75 818.70 2034.75 818.70 H2059.75 Q2062.75 818.70 2062.75 821.70 V1114.60 Z" fill="#6b37f0" fill-opacity="0.6"/><rect x="2031.75" y="1114.60" width="31" height="12.30" fill="#d97b5a" fill-opacity="0.6"/><rect x="2031.75" y="1126.90" width="31" height="21.10" fill="#bee6cf" fill-opacity="0.6"/><rect x="2031.75" y="1148.00" width="31" height="35.20" fill="#4461cf" fill-opacity="0.6"/><rect x="2031.75" y="1183.20" width="31" height="26.00" fill="#edcf76" fill-opacity="0.6"/><rect x="2031.75" y="1209.20" width="31" height="29.70" fill="#cb5c5d" fill-opacity="0.6"/><rect x="2031.75" y="1238.90" width="31" height="45.70" fill="#f0bea2" fill-opacity="0.6"/><path d="M2071.00 1062.30 V754.10 Q2071.00 751.10 2074.00 751.10 H2099.00 Q2102.00 751.10 2102.00 754.10 V1062.30 Z" fill="#6b37f0" fill-opacity="0.6"/><rect x="2071.00" y="1062.30" width="31" height="21.80" fill="#d97b5a" fill-opacity="0.6"/><rect x="2071.00" y="1084.10" width="31" height="29.20" fill="#bee6cf" fill-opacity="0.6"/><rect x="2071.00" y="1113.30" width="31" height="36.90" fill="#4461cf" fill-opacity="0.6"/><rect x="2071.00" y="1150.20" width="31" height="38.70" fill="#edcf76" fill-opacity="0.6"/><rect x="2071.00" y="1188.90" width="31" height="31.90" fill="#cb5c5d" fill-opacity="0.6"/><rect x="2071.00" y="1220.80" width="31" height="63.80" fill="#f0bea2" fill-opacity="0.6"/><path d="M2110.25 1051.90 V794.40 Q2110.25 791.40 2113.25 791.40 H2138.25 Q2141.25 791.40 2141.25 794.40 V1051.90 Z" fill="#6b37f0" fill-opacity="0.6"/><rect x="2110.25" y="1051.90" width="31" height="12.40" fill="#d97b5a" fill-opacity="0.6"/><rect x="2110.25" y="1064.30" width="31" height="11.10" fill="#bee6cf" fill-opacity="0.6"/><rect x="2110.25" y="1075.40" width="31" height="29.80" fill="#4461cf" fill-opacity="0.6"/><rect x="2110.25" y="1105.20" width="31" height="40.80" fill="#edcf76" fill-opacity="0.6"/><rect x="2110.25" y="1146.00" width="31" height="54.00" fill="#cb5c5d" fill-opacity="0.6"/><rect x="2110.25" y="1200.00" width="31" height="84.60" fill="#f0bea2" fill-opacity="0.6"/><path d="M2149.50 1070.50 V762.70 Q2149.50 759.70 2152.50 759.70 H2177.50 Q2180.50 759.70 2180.50 762.70 V1070.50 Z" fill="#6b37f0" fill-opacity="0.6"/><rect x="2149.50" y="1070.50" width="31" height="16.60" fill="#d97b5a" fill-opacity="0.6"/><rect x="2149.50" y="1087.10" width="31" height="23.00" fill="#bee6cf" fill-opacity="0.6"/><rect x="2149.50" y="1110.10" width="31" height="29.70" fill="#4461cf" fill-opacity="0.6"/><rect x="2149.50" y="1139.80" width="31" height="22.30" fill="#edcf76" fill-opacity="0.6"/><rect x="2149.50" y="1162.10" width="31" height="37.20" fill="#cb5c5d" fill-opacity="0.6"/><rect x="2149.50" y="1199.30" width="31" height="85.30" fill="#f0bea2" fill-opacity="0.6"/><path d="M2188.75 1063.60 V772.20 Q2188.75 769.20 2191.75 769.20 H2216.75 Q2219.75 769.20 2219.75 772.20 V1063.60 Z" fill="#6b37f0" fill-opacity="0.6"/><rect x="2188.75" y="1063.60" width="31" height="19.80" fill="#d97b5a" fill-opacity="0.6"/><rect x="2188.75" y="1083.40" width="31" height="15.10" fill="#bee6cf" fill-opacity="0.6"/><rect x="2188.75" y="1098.50" width="31" height="39.30" fill="#4461cf" fill-opacity="0.6"/><rect x="2188.75" y="1137.80" width="31" height="45.40" fill="#edcf76" fill-opacity="0.6"/><rect x="2188.75" y="1183.20" width="31" height="32.70" fill="#cb5c5d" fill-opacity="0.6"/><rect x="2188.75" y="1215.90" width="31" height="68.70" fill="#f0bea2" fill-opacity="0.6"/><path d="M2228.00 1102.20 V827.70 Q2228.00 824.70 2231.00 824.70 H2256.00 Q2259.00 824.70 2259.00 827.70 V1102.20 Z" fill="#6b37f0" fill-opacity="0.6"/><rect x="2228.00" y="1102.20" width="31" height="29.00" fill="#d97b5a" fill-opacity="0.6"/><rect x="2228.00" y="1131.20" width="31" height="19.80" fill="#bee6cf" fill-opacity="0.6"/><rect x="2228.00" y="1151.00" width="31" height="22.80" fill="#4461cf" fill-opacity="0.6"/><rect x="2228.00" y="1173.80" width="31" height="24.20" fill="#edcf76" fill-opacity="0.6"/><rect x="2228.00" y="1198.00" width="31" height="31.70" fill="#cb5c5d" fill-opacity="0.6"/><rect x="2228.00" y="1229.70" width="31" height="54.90" fill="#f0bea2" fill-opacity="0.6"/><path d="M2267.25 1165.80 V1021.30 Q2267.25 1018.30 2270.25 1018.30 H2295.25 Q2298.25 1018.30 2298.25 1021.30 V1165.80 Z" fill="#6b37f0" fill-opacity="0.6"/><rect x="2267.25" y="1165.80" width="31" height="17.90" fill="#d97b5a" fill-opacity="0.6"/><rect x="2267.25" y="1183.70" width="31" height="6.40" fill="#bee6cf" fill-opacity="0.6"/><rect x="2267.25" y="1190.10" width="31" height="8.70" fill="#4461cf" fill-opacity="0.6"/><rect x="2267.25" y="1198.80" width="31" height="10.90" fill="#edcf76" fill-opacity="0.6"/><rect x="2267.25" y="1209.70" width="31" height="20.50" fill="#cb5c5d" fill-opacity="0.6"/><rect x="2267.25" y="1230.20" width="31" height="54.40" fill="#f0bea2" fill-opacity="0.6"/></svg>
<div class="t" style="right:1822.4px;top:634.6px;font-size:28px;color:#161616;letter-spacing:1.6px;text-align:right">$1.6k</div>
<div class="t" style="right:1822.4px;top:714.1px;font-size:28px;color:#161616;letter-spacing:1.6px;text-align:right">$1.4k</div>
<div class="t" style="right:1822.4px;top:793.6px;font-size:28px;color:#161616;letter-spacing:1.6px;text-align:right">$1.2k</div>
<div class="t" style="right:1822.4px;top:873.1px;font-size:28px;color:#161616;letter-spacing:1.6px;text-align:right">$1k</div>
<div class="t" style="right:1822.4px;top:952.6px;font-size:28px;color:#161616;letter-spacing:1.6px;text-align:right">$800</div>
<div class="t" style="right:1822.4px;top:1031.6px;font-size:28px;color:#161616;letter-spacing:1.6px;text-align:right">$600</div>
<div class="t" style="right:1822.4px;top:1111.1px;font-size:28px;color:#161616;letter-spacing:1.6px;text-align:right">$400</div>
<div class="t" style="right:1822.4px;top:1190.6px;font-size:28px;color:#161616;letter-spacing:1.6px;text-align:right">$200</div>
<div class="t" style="right:1822.4px;top:1270.1px;font-size:28px;color:#161616;letter-spacing:1.6px;text-align:right">$0</div>
<div class="t" style="left:1043.0px;width:200px;text-align:center;top:1300.2px;font-size:28px;color:#161616;letter-spacing:1.1px">Jun 11</div>
<div class="t" style="left:1278.5px;width:200px;text-align:center;top:1300.2px;font-size:28px;color:#161616;letter-spacing:1.1px">Jun 17</div>
<div class="t" style="left:1514.0px;width:200px;text-align:center;top:1300.2px;font-size:28px;color:#161616;letter-spacing:1.1px">Jun 23</div>
<div class="t" style="left:1749.5px;width:200px;text-align:center;top:1300.2px;font-size:28px;color:#161616;letter-spacing:1.1px">Jun 29</div>
<div class="t" style="left:1985.0px;width:200px;text-align:center;top:1300.2px;font-size:28px;color:#161616;letter-spacing:1.1px">Jul 5</div>
<div style="position:absolute;left:2356.4px;top:478.5px;width:467.9px;height:78.7px;box-sizing:border-box;border:2px solid #c2c2c2;border-radius:13px;background:#fff"></div>
<div class="t" style="left:2382.1px;top:505.0px;font-size:28px;color:#ababab;font-weight:400;letter-spacing:1.2px;">Search</div>
<svg style="position:absolute;left:2760px;top:490px;" width="55" height="55" viewBox="2760 490 55 55"><circle cx="2784" cy="512.8" r="10.9" fill="none" stroke="#808080" stroke-width="3.8"/>
<path d="M2792.4 521.4 L2804 532.8" stroke="#808080" stroke-width="3.6" stroke-linecap="round"/></svg>
<div class="t" style="left:2356.9px;top:578.9px;font-size:28px;color:#707070;font-weight:400;letter-spacing:3.1px;">7/7</div>
<div class="t m" style="left:2419.0px;top:640.3px;font-size:28px;color:#141414;font-weight:400;letter-spacing:0.95px;">Select all</div>
<div class="t m" style="left:2419.0px;top:720.3px;font-size:28px;color:#141414;font-weight:400;letter-spacing:0.95px;">Renewals 6+</div>
<div class="t m" style="left:2419.0px;top:800.3px;font-size:28px;color:#141414;font-weight:400;letter-spacing:0.95px;">Renewal 5</div>
<div class="t m" style="left:2419.0px;top:880.3px;font-size:28px;color:#141414;font-weight:400;letter-spacing:0.95px;">Renewal 4</div>
<div class="t m" style="left:2419.0px;top:960.3px;font-size:28px;color:#141414;font-weight:400;letter-spacing:0.95px;">Renewal 3</div>
<div class="t m" style="left:2419.0px;top:1040.3px;font-size:28px;color:#141414;font-weight:400;letter-spacing:0.95px;">Renewal 2</div>
<div class="t m" style="left:2419.0px;top:1120.3px;font-size:28px;color:#141414;font-weight:400;letter-spacing:0.95px;">Renewal 1</div>
<div class="t m" style="left:2419.0px;top:1200.3px;font-size:28px;color:#141414;font-weight:400;letter-spacing:0.95px;">Activation</div>
<svg style="position:absolute;left:2355px;top:620px;" width="60" height="620" viewBox="2355 620 60 620"><rect x="2363.8" y="634.0" width="40.2" height="40" rx="8" fill="#111111"/><path d="M2374.6 655.2 L2381.4 661.4 L2392.4 645.8" fill="none" stroke="#fff" stroke-width="4.8" stroke-linecap="butt" stroke-linejoin="round"/><rect x="2363.8" y="714.0" width="40.2" height="40" rx="8" fill="#5f25ee"/><path d="M2374.6 735.2 L2381.4 741.4 L2392.4 725.8" fill="none" stroke="#fff" stroke-width="4.8" stroke-linecap="butt" stroke-linejoin="round"/><rect x="2363.8" y="794.0" width="40.2" height="40" rx="8" fill="#d9734f"/><path d="M2374.6 815.2 L2381.4 821.4 L2392.4 805.8" fill="none" stroke="#fff" stroke-width="4.8" stroke-linecap="butt" stroke-linejoin="round"/><rect x="2363.8" y="874.0" width="40.2" height="40" rx="8" fill="#bfe6d1"/><path d="M2374.6 895.2 L2381.4 901.4 L2392.4 885.8" fill="none" stroke="#fff" stroke-width="4.8" stroke-linecap="butt" stroke-linejoin="round"/><rect x="2363.8" y="954.0" width="40.2" height="40" rx="8" fill="#3a56d4"/><path d="M2374.6 975.2 L2381.4 981.4 L2392.4 965.8" fill="none" stroke="#fff" stroke-width="4.8" stroke-linecap="butt" stroke-linejoin="round"/><rect x="2363.8" y="1034.0" width="40.2" height="40" rx="8" fill="#ecd07a"/><path d="M2374.6 1055.2 L2381.4 1061.4 L2392.4 1045.8" fill="none" stroke="#fff" stroke-width="4.8" stroke-linecap="butt" stroke-linejoin="round"/><rect x="2363.8" y="1114.0" width="40.2" height="40" rx="8" fill="#cc4a4f"/><path d="M2374.6 1135.2 L2381.4 1141.4 L2392.4 1125.8" fill="none" stroke="#fff" stroke-width="4.8" stroke-linecap="butt" stroke-linejoin="round"/><rect x="2363.8" y="1194.0" width="40.2" height="40" rx="8" fill="#f2bd9c"/><path d="M2374.6 1215.2 L2381.4 1221.4 L2392.4 1205.8" fill="none" stroke="#fff" stroke-width="4.8" stroke-linecap="butt" stroke-linejoin="round"/></svg>
<div style="position:absolute;left:436.0px;top:1290.0px;width:2492.0px;height:88.0px;pointer-events:none;background:linear-gradient(rgba(0,0,0,0) 0%, rgba(0,0,0,0.02) 57%, rgba(0,0,0,0.09) 100%);-webkit-mask-image:linear-gradient(to right,#000 0px,#000 1714px,transparent 2014px);mask-image:linear-gradient(to right,#000 0px,#000 1714px,transparent 2014px)"></div>
</body></html>
